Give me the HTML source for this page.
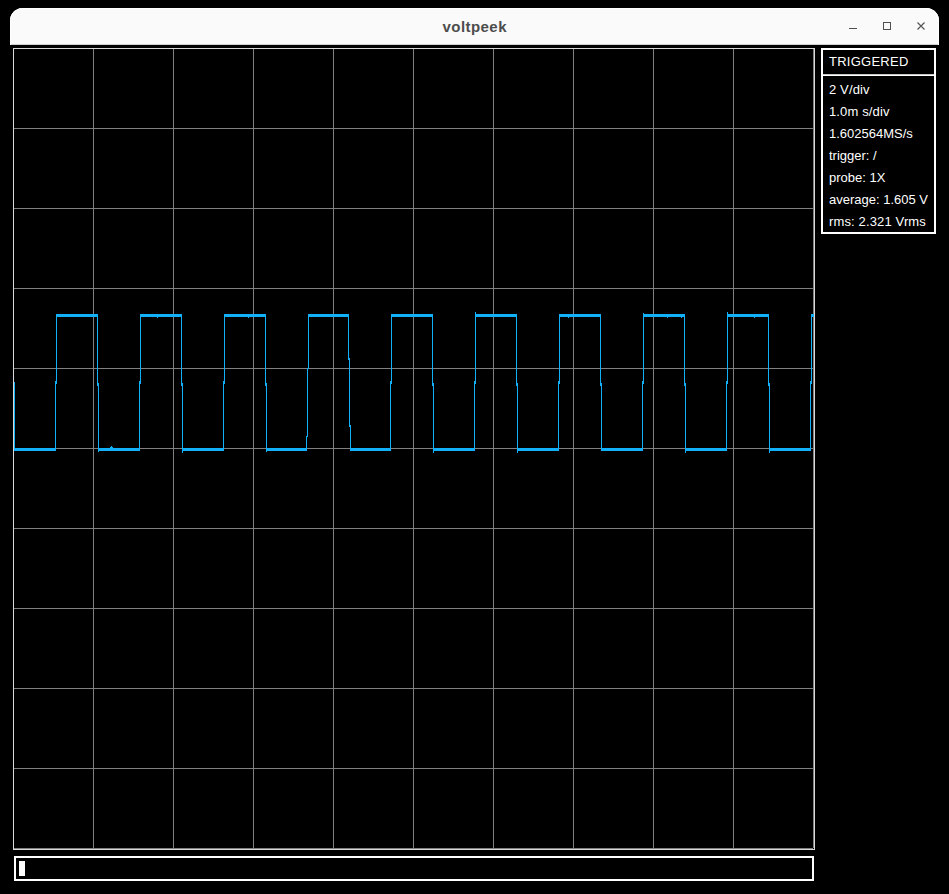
<!DOCTYPE html>
<html><head><meta charset="utf-8">
<style>
html,body{margin:0;padding:0;background:#000;width:949px;height:894px;overflow:hidden;position:relative;}
*{box-sizing:border-box;}
.tb{position:absolute;left:10px;top:8px;width:929px;height:37px;background:#fafafa;border-radius:13px 13px 0 0;box-shadow:inset 0 1px 0 #fff, inset 1px 0 0 #fff, inset -1px 0 0 #fff, inset 0 -1px 0 #cfcfcf;}
.title{position:absolute;left:10px;top:8px;width:929px;height:37px;text-align:center;font:bold 15px "Liberation Sans",sans-serif;color:#4d4d4d;line-height:37px;letter-spacing:0.45px;text-indent:0.45px;}
svg{position:absolute;left:0;top:0;}
.ln{position:absolute;left:829px;font:13px "Liberation Sans",sans-serif;color:#fff;line-height:20px;white-space:nowrap;}
</style></head><body>
<div class="tb"></div>
<div class="title">voltpeek</div>
<svg width="949" height="894" shape-rendering="crispEdges">
<g fill="#505050">
<rect x="849" y="28" width="8" height="1"/>
<rect x="883" y="22" width="7" height="7" fill="none" stroke="#505050" stroke-width="1" transform="translate(0.5,0.5)" />
</g>
<g fill="#d9d9d9"><rect x="13" y="48" width="802" height="1"/><rect x="13" y="849" width="802" height="1"/><rect x="13" y="48" width="1" height="802"/><rect x="814" y="48" width="1" height="802"/></g>
<g fill="#808080"><rect x="93" y="49" width="1" height="799"/><rect x="173" y="49" width="1" height="799"/><rect x="253" y="49" width="1" height="799"/><rect x="333" y="49" width="1" height="799"/><rect x="413" y="49" width="1" height="799"/><rect x="493" y="49" width="1" height="799"/><rect x="573" y="49" width="1" height="799"/><rect x="653" y="49" width="1" height="799"/><rect x="733" y="49" width="1" height="799"/><rect x="813" y="49" width="1" height="799"/><rect x="14" y="128" width="799" height="1"/><rect x="14" y="208" width="799" height="1"/><rect x="14" y="288" width="799" height="1"/><rect x="14" y="368" width="799" height="1"/><rect x="14" y="448" width="799" height="1"/><rect x="14" y="528" width="799" height="1"/><rect x="14" y="608" width="799" height="1"/><rect x="14" y="688" width="799" height="1"/><rect x="14" y="768" width="799" height="1"/><rect x="14" y="848" width="799" height="1"/></g>
<g fill="#12b0f8"><rect x="14" y="382" width="1" height="69"/><rect x="55" y="381" width="1" height="70"/><rect x="56" y="314" width="1" height="70"/><rect x="14" y="448" width="42" height="3"/><rect x="97" y="314" width="1" height="72"/><rect x="98" y="383" width="1" height="68"/><rect x="56" y="314" width="42" height="3"/><rect x="139" y="381" width="1" height="70"/><rect x="140" y="314" width="1" height="70"/><rect x="98" y="448" width="42" height="3"/><rect x="181" y="314" width="1" height="72"/><rect x="182" y="383" width="1" height="68"/><rect x="140" y="314" width="42" height="3"/><rect x="223" y="381" width="1" height="70"/><rect x="224" y="314" width="1" height="70"/><rect x="182" y="448" width="42" height="3"/><rect x="265" y="314" width="1" height="72"/><rect x="266" y="383" width="1" height="68"/><rect x="224" y="314" width="42" height="3"/><rect x="306" y="436" width="1" height="15"/><rect x="307" y="368" width="1" height="69"/><rect x="308" y="314" width="1" height="55"/><rect x="266" y="448" width="41" height="3"/><rect x="348" y="314" width="1" height="46"/><rect x="349" y="358" width="1" height="69"/><rect x="350" y="425" width="1" height="26"/><rect x="308" y="314" width="41" height="3"/><rect x="390" y="381" width="1" height="70"/><rect x="391" y="314" width="1" height="70"/><rect x="350" y="448" width="41" height="3"/><rect x="432" y="314" width="1" height="72"/><rect x="433" y="383" width="1" height="68"/><rect x="391" y="314" width="42" height="3"/><rect x="474" y="381" width="1" height="70"/><rect x="475" y="314" width="1" height="70"/><rect x="433" y="448" width="42" height="3"/><rect x="516" y="314" width="1" height="72"/><rect x="517" y="383" width="1" height="68"/><rect x="475" y="314" width="42" height="3"/><rect x="558" y="381" width="1" height="70"/><rect x="559" y="314" width="1" height="70"/><rect x="517" y="448" width="42" height="3"/><rect x="600" y="314" width="1" height="72"/><rect x="601" y="383" width="1" height="68"/><rect x="559" y="314" width="42" height="3"/><rect x="642" y="381" width="1" height="70"/><rect x="643" y="314" width="1" height="70"/><rect x="601" y="448" width="42" height="3"/><rect x="684" y="314" width="1" height="72"/><rect x="685" y="383" width="1" height="68"/><rect x="643" y="314" width="42" height="3"/><rect x="726" y="381" width="1" height="70"/><rect x="727" y="314" width="1" height="70"/><rect x="685" y="448" width="42" height="3"/><rect x="768" y="314" width="1" height="72"/><rect x="769" y="383" width="1" height="68"/><rect x="727" y="314" width="42" height="3"/><rect x="810" y="381" width="1" height="70"/><rect x="811" y="314" width="1" height="70"/><rect x="769" y="448" width="42" height="3"/><rect x="811" y="314" width="3" height="3"/><rect x="157" y="317" width="1" height="1"/><rect x="248" y="317" width="1" height="1"/><rect x="568" y="317" width="1" height="1"/><rect x="667" y="317" width="1" height="1"/><rect x="681" y="317" width="1" height="1"/><rect x="754" y="317" width="1" height="1"/><rect x="475" y="312" width="1" height="2"/><rect x="727" y="312" width="1" height="2"/><rect x="643" y="313" width="1" height="1"/><rect x="182" y="451" width="1" height="2"/><rect x="433" y="451" width="1" height="2"/><rect x="517" y="451" width="1" height="2"/><rect x="685" y="451" width="1" height="2"/><rect x="769" y="451" width="1" height="2"/><rect x="98" y="451" width="1" height="1"/><rect x="266" y="451" width="1" height="1"/><rect x="110" y="447" width="3" height="1"/><rect x="111" y="446" width="1" height="1"/></g>
<g fill="#fff">
<rect x="821" y="48" width="115" height="2"/><rect x="821" y="232" width="115" height="2"/>
<rect x="821" y="48" width="2" height="186"/><rect x="934" y="48" width="2" height="186"/>
<rect x="823" y="75" width="111" height="1"/><rect x="823" y="74" width="111" height="1" fill="#c8c8c8"/>
<rect x="14" y="856" width="800" height="2"/><rect x="14" y="879" width="800" height="2"/>
<rect x="14" y="856" width="2" height="25"/><rect x="812" y="856" width="2" height="25"/>
<rect x="19" y="861" width="6" height="15"/>
</g>
</svg>
<svg width="949" height="894"><path d="M917.5 22.5 L924.5 29.5 M924.5 22.5 L917.5 29.5" stroke="#555" stroke-width="1.15" fill="none"/></svg>
<div class="ln" style="top:52px;letter-spacing:0.25px">TRIGGERED</div>
<div class="ln" style="top:80px;letter-spacing:0.13px">2 V/div</div><div class="ln" style="top:102px;letter-spacing:0.14px">1.0m s/div</div><div class="ln" style="top:124px;letter-spacing:0px">1.602564MS/s</div><div class="ln" style="top:146px;letter-spacing:0px">trigger: /</div><div class="ln" style="top:168px;letter-spacing:0px">probe: 1X</div><div class="ln" style="top:190px;letter-spacing:0px">average: 1.605 V</div><div class="ln" style="top:212px;letter-spacing:0.14px">rms: 2.321 Vrms</div>
</body></html>
